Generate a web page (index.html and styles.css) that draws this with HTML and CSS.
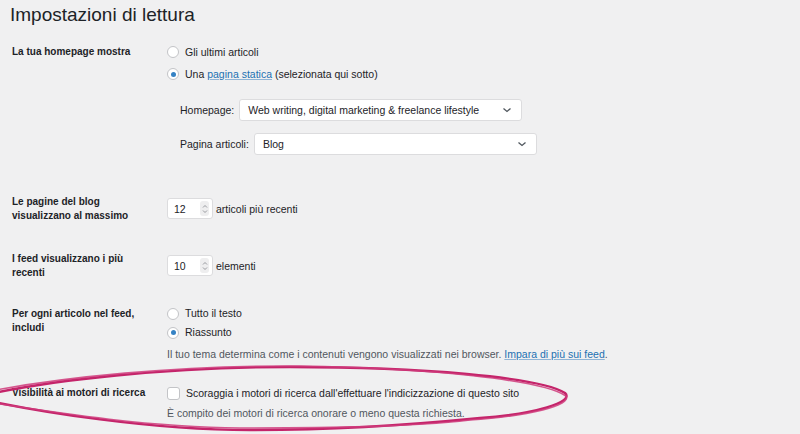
FILE: index.html
```html
<!DOCTYPE html>
<html lang="it">
<head>
    <meta charset="UTF-8">
    <meta name="viewport" content="width=device-width, initial-scale=1.0">
    <title>Impostazioni di lettura</title>
    <link rel="stylesheet" href="styles.css">
</head>
<body>
    <div class="wrap">
        <h1>Impostazioni di lettura</h1>

        <div class="row row-front">
            <div class="th">La tua homepage mostra</div>
            <div class="td">
                <div class="choice"><span class="radio"></span>Gli ultimi articoli</div>
                <div class="choice"><span class="radio checked"></span>Una&nbsp;<a href="#">pagina statica</a>&nbsp;(selezionata qui sotto)</div>
                <div class="pick pick-first">
                    <span class="pick-label">Homepage:</span>
                    <span class="select">
                        <span>Web writing, digital marketing &amp; freelance lifestyle</span>
                        <svg width="10" height="6" viewBox="0 0 10 6"><path d="M1.5 1.5 L5 4.5 L8.5 1.5" fill="none" stroke="#50575e" stroke-width="1.3"/></svg>
                    </span>
                </div>
                <div class="pick">
                    <span class="pick-label">Pagina articoli:</span>
                    <span class="select">
                        <span>Blog</span>
                        <svg width="10" height="6" viewBox="0 0 10 6"><path d="M1.5 1.5 L5 4.5 L8.5 1.5" fill="none" stroke="#50575e" stroke-width="1.3"/></svg>
                    </span>
                </div>
            </div>
        </div>

        <div class="row row-posts">
            <div class="th">Le pagine del blog<br>visualizzano al massimo</div>
            <div class="td td-number">
                <span class="number">12
                    <span class="spin"><svg width="6" height="10" viewBox="0 0 6 10"><path d="M1 3.5 L3 1.5 L5 3.5 M1 6.5 L3 8.5 L5 6.5" fill="none" stroke="#8c8f94" stroke-width="0.9"/></svg></span>
                </span>
                articoli più recenti
            </div>
        </div>

        <div class="row row-feed">
            <div class="th">I feed visualizzano i più<br>recenti</div>
            <div class="td td-number">
                <span class="number">10
                    <span class="spin"><svg width="6" height="10" viewBox="0 0 6 10"><path d="M1 3.5 L3 1.5 L5 3.5 M1 6.5 L3 8.5 L5 6.5" fill="none" stroke="#8c8f94" stroke-width="0.9"/></svg></span>
                </span>
                elementi
            </div>
        </div>

        <div class="row row-include">
            <div class="th">Per ogni articolo nel feed,<br>includi</div>
            <div class="td">
                <div class="choice small"><span class="radio"></span>Tutto il testo</div>
                <div class="choice small"><span class="radio checked"></span>Riassunto</div>
                <p class="desc">Il tuo tema determina come i contenuti vengono visualizzati nei browser. <a href="#">Impara di più sui feed</a>.</p>
            </div>
        </div>

        <div class="row row-search">
            <div class="th">Visibilità ai motori di ricerca</div>
            <div class="td">
                <div class="choice check-line"><span class="checkbox"></span>Scoraggia i motori di ricerca dall'effettuare l'indicizzazione di questo sito</div>
                <p class="desc desc-search">È compito dei motori di ricerca onorare o meno questa richiesta.</p>
            </div>
        </div>
    </div>

    <!-- evidenziazione a mano libera -->
    <svg class="marker" width="800" height="434" viewBox="0 0 800 434">
        <path d="M -20 396 C 50 380, 170 367, 290 367 C 420 367, 540 377, 565 393 C 575 402, 535 414, 480 418 C 420 424, 340 430, 250 430 C 150 430, 40 412, -20 399"
              fill="none" stroke="#c4246a" stroke-width="2.4"/>
        <path d="M -20 393 C 60 377, 180 365, 300 366 C 430 368, 543 380, 566 396 C 572 405, 530 416, 470 420 C 410 427, 330 428, 240 428 C 140 427, 40 410, -20 401"
              fill="none" stroke="#cf3b7b" stroke-width="1.6" opacity="0.85"/>
    </svg>
</body>
</html>
```

FILE: styles.css
```css
body {
    margin: 0;
    background-color: #f0f0f1;
    color: #1d2327;
    font-family: "Liberation Sans", Arial, sans-serif;
    font-size: 10.5px;
}

a {
    color: #2271b1;
    text-decoration-color: #8fb4d6;
}

.wrap {
    padding: 0 10px 0 12px;
}

h1 {
    margin: 0 0 0 -2px;
    padding-top: 5px;
    font-size: 19px;
    font-weight: 400;
    line-height: 20px;
}

.row {
    display: flex;
    align-items: flex-start;
}

.th {
    width: 155px;
    flex-shrink: 0;
    font-weight: bold;
    font-size: 10px;
    line-height: 14px;
}

.row-front {
    margin-top: 16px;
}

.row-front .th {
    line-height: 22px;
}

.choice {
    display: flex;
    align-items: center;
    line-height: 22px;
    white-space: nowrap;
}

.choice.small {
    line-height: 19px;
}

.radio {
    width: 10px;
    height: 10px;
    border: 1px solid #c3c4c7;
    border-radius: 50%;
    background-color: #fff;
    margin-right: 6px;
    display: flex;
    align-items: center;
    justify-content: center;
}

.radio.checked::after {
    content: "";
    width: 5px;
    height: 5px;
    border-radius: 50%;
    background-color: #3582c4;
}

.checkbox {
    width: 11px;
    height: 11px;
    border: 1px solid #c3c4c7;
    border-radius: 3px;
    background-color: #fff;
    margin-right: 6px;
}

.pick {
    display: flex;
    align-items: center;
    margin-top: 12px;
    padding-left: 13px;
}

.pick-first {
    margin-top: 14px;
}

.pick-label {
    margin-right: 5px;
}

.select {
    width: 283px;
    height: 22px;
    box-sizing: border-box;
    border: 1px solid #dcdcde;
    border-radius: 3px;
    background-color: #fff;
    padding: 0 8px 0 8px;
    display: flex;
    align-items: center;
    justify-content: space-between;
}

.select svg {
    margin-right: 1px;
}

.row-posts {
    margin-top: 40px;
}

.row-feed {
    margin-top: 29px;
}

.td-number {
    display: flex;
    align-items: center;
    padding-top: 3px;
}

.number {
    width: 46px;
    height: 21px;
    box-sizing: border-box;
    border: 1px solid #dcdcde;
    border-radius: 3px;
    background-color: #fff;
    padding: 0 3px 0 6px;
    margin-right: 3px;
    display: flex;
    align-items: center;
    justify-content: space-between;
}

.spin {
    width: 9px;
    height: 15px;
    border-radius: 3px;
    background-color: #eeeeef;
    display: flex;
    align-items: center;
    justify-content: center;
}

.row-include {
    margin-top: 24px;
}

.row-include .th {
    padding-top: 3px;
}

.desc {
    margin: 5px 0 0;
    line-height: 14px;
    color: #50575e;
    white-space: nowrap;
}

.row-search {
    margin-top: 24px;
}

.row-search .th {
    line-height: 16px;
}

.check-line {
    line-height: 16px;
}

.marker {
    position: absolute;
    left: 0;
    top: 0;
    pointer-events: none;
}
```
